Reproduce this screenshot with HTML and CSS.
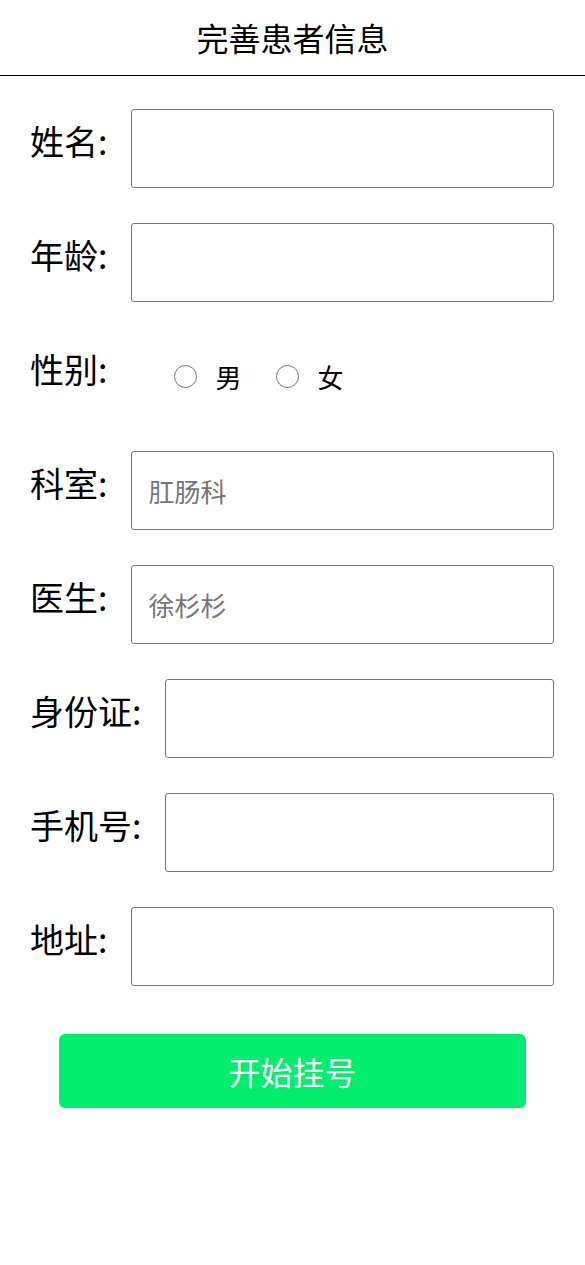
FILE: index.html
```html
<!DOCTYPE HTML>
<html lang="zh-CN">
<head>
<meta charset="UTF-8">
<title>完善患者信息</title>
<link rel="stylesheet" href="styles.css">
</head>
<body>
<div class="header">完善患者信息</div>

<form class="info-form">
    <div class="row">
        <label class="label">姓名:</label>
        <input class="field" type="text">
    </div>
    <div class="row">
        <label class="label">年龄:</label>
        <input class="field" type="text">
    </div>
    <div class="row">
        <label class="label">性别:</label>
        <div class="radios">
            <label class="radio"><input type="radio" name="sex"> 男</label>
            <label class="radio"><input type="radio" name="sex"> 女</label>
        </div>
    </div>
    <div class="row">
        <label class="label">科室:</label>
        <input class="field" type="text" placeholder="肛肠科">
    </div>
    <div class="row">
        <label class="label">医生:</label>
        <input class="field" type="text" placeholder="徐杉杉">
    </div>
    <div class="row">
        <label class="label">身份证:</label>
        <input class="field" type="text">
    </div>
    <div class="row">
        <label class="label">手机号:</label>
        <input class="field" type="text">
    </div>
    <div class="row">
        <label class="label">地址:</label>
        <input class="field" type="text">
    </div>
    <button class="submit" type="button">开始挂号</button>
</form>
</body>
</html>
```

FILE: styles.css
```css
body {
    margin: 0;
    background-color: white;
    font-family: "Noto Sans CJK SC", "Noto Sans", sans-serif;
    color: black;
}

.header {
    height: 75px;
    line-height: 74px;
    text-align: center;
    font-size: 32px;
    border-bottom: 1px solid black;
}

.info-form {
    padding: 33px 31px 0 30px;
}

.row {
    display: flex;
    height: 79px;
    margin-bottom: 35px;
}

.label {
    font-size: 34px;
    line-height: 1;
    padding-top: 15px;
    margin-right: 24px;
    white-space: nowrap;
}

.field {
    flex: 1;
    min-width: 0;
    box-sizing: border-box;
    height: 79px;
    border: 1px solid #767676;
    border-radius: 3px;
    padding: 0 16px;
    font-size: 26px;
    font-family: "Noto Sans CJK SC", "Noto Sans", sans-serif;
    outline: none;
}

.field::placeholder {
    color: #757575;
}

.radios {
    display: flex;
    gap: 35px;
    padding-top: 24px;
    padding-left: 43px;
}

.radio {
    display: flex;
    align-items: center;
    height: 30px;
    font-size: 26px;
}

.radio input {
    appearance: none;
    width: 23px;
    height: 23px;
    margin: 0 18px 0 0;
    border: 1px solid #767676;
    border-radius: 50%;
}

.submit {
    display: block;
    width: 467px;
    height: 74px;
    margin: 48px 0 0 29px;
    border: none;
    border-radius: 6px;
    background-color: #00ed6e;
    color: white;
    font-size: 32px;
    font-family: "Noto Sans CJK SC", "Noto Sans", sans-serif;
}
```
